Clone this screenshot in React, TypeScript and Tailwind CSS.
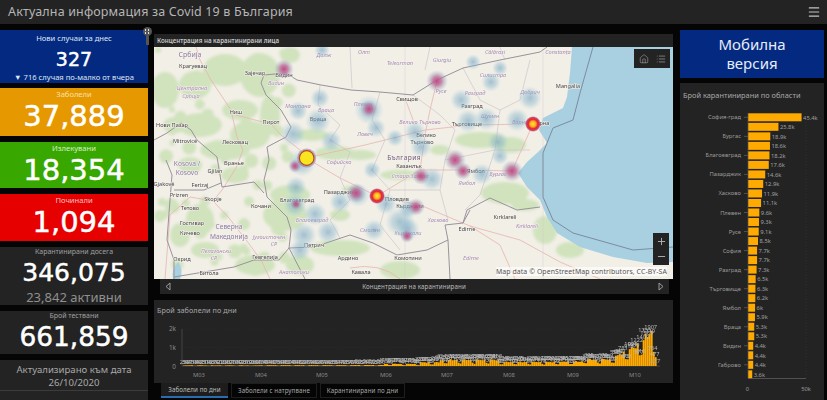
import { Home, List, Menu, Plus, Minus } from "lucide-react"

const font = "font-['Noto_Sans','Open_Sans',sans-serif]"
const numFont = "font-['DejaVu_Sans',sans-serif] [-webkit-text-stroke:0.5px_white]"

// place names on the map, in page coordinates
const cities: [string, number, number][] = [
  ["Крагуевац", 193, 68], ["Зајечар", 255, 75], ["Видин", 284, 77], ["Ниш", 236, 114], ["Пирот", 271, 124],
  ["Нови Пазар", 172, 127], ["Mitrovicë", 185, 143], ["Лесковац", 235, 144], ["Gjilan", 215, 173], ["Враньe", 234, 165],
  ["Ferizaj", 200, 187], ["Gjakovë", 164, 186], ["Prizren", 179, 197], ["Skopje", 213, 201], ["Тетово", 190, 210],
  ["Кочани", 261, 208], ["Гостивар", 192, 225], ["Кичево", 190, 235], ["Охрид", 182, 261], ["Гевгелија", 265, 259],
  ["Битола", 209, 275], ["Петрич", 314, 247], ["Благоевград", 297, 202], ["Пазарджик", 339, 194], ["Пловдив", 397, 201],
  ["Свищов", 407, 101], ["Разград", 472, 108], ["Търговище", 467, 126], ["Велико", 426, 137], ["Търново", 422, 144],
  ["Казанлък", 409, 168], ["Ямбол", 476, 173], ["Варна", 541, 125], ["Mangalia", 568, 88], ["Враца", 318, 121],
  ["Kırklareli", 505, 219], ["Edirne", 467, 231], ["Кърджали", 410, 208], ["Комотини", 408, 260], ["Ардино", 348, 260],
  ["Кавала", 361, 274],
]
const regions: [string, number, number][] = [
  ["Централна", 192, 90], ["Србија", 191, 98], ["Видин", 276, 85], ["Монтана", 298, 108], ["Враца", 326, 112],
  ["Ловеч", 365, 136], ["Велико Търново", 420, 124], ["Плевен", 363, 106], ["Русе", 441, 93], ["Разград", 475, 95],
  ["Силистра", 493, 77], ["Добрич", 530, 94], ["Шумен", 490, 118], ["Варна", 520, 124], ["Бургас", 498, 176],
  ["Ямбол", 467, 185], ["Стара Загора", 410, 178], ["Хасково", 438, 222], ["Кърджали", 408, 235], ["Смолян", 370, 232],
  ["Софийско", 339, 164], ["Благоевград", 312, 222], ["Пелагонски", 216, 253], ["СР", 214, 260], ["Југоисточен", 269, 239],
  ["СР", 274, 246], ["Kırklareli", 527, 228], ["Edirne", 471, 260], ["Долж", 324, 57], ["Teleorman", 400, 65],
  ["Giurgiu", 442, 62], ["Constanța", 558, 54], ["Călărași", 495, 54], ["Олт", 364, 54], ["Анатолики", 294, 274],
]

const greens: [number, number, number, number][] = [
  [165, 90, 14, 18], [195, 85, 16, 14], [225, 70, 22, 16], [260, 75, 20, 22], [240, 110, 18, 10], [200, 125, 22, 12],
  [175, 125, 12, 8], [250, 135, 20, 14], [225, 150, 25, 10], [270, 115, 10, 20], [290, 55, 10, 8], [190, 165, 12, 8],
  [235, 175, 14, 8], [290, 195, 20, 10], [285, 215, 22, 16], [200, 220, 14, 16], [180, 235, 10, 12], [255, 265, 20, 10],
  [300, 265, 14, 10], [340, 248, 30, 8], [400, 270, 20, 9], [335, 153, 20, 7], [360, 155, 16, 5], [400, 175, 20, 5],
  [440, 150, 10, 5], [480, 140, 25, 8], [510, 145, 16, 8], [505, 193, 24, 11], [525, 205, 14, 6], [340, 215, 10, 6],
  [350, 190, 8, 4], [545, 230, 12, 14], [570, 250, 14, 8], [312, 135, 16, 6], [205, 250, 14, 8],
]

// small scattered forest around the west of the map
const scatter = Array.from({ length: 70 }, (_, i) => ({
  x: 158 + Math.abs(Math.sin(i * 12.9898) * 43758.5) % 135,
  y: 50 + Math.abs(Math.sin(i * 78.233) * 12543.7) % 225,
  r: 3 + (i % 5),
}))

// blue patches of the heat layer: x, y, radius
const heatBlue: [number, number, number][] = [
  [302, 163, 14], [293, 134, 13], [318, 121, 13], [322, 50, 8], [369, 110, 15], [376, 128, 10], [395, 138, 9],
  [331, 141, 11], [372, 170, 9], [415, 132, 11], [421, 147, 11], [461, 100, 11], [468, 121, 12], [486, 119, 12], [473, 62, 8],
  [491, 82, 10], [500, 68, 8], [530, 98, 12], [517, 120, 12], [498, 142, 11], [500, 156, 9], [296, 187, 11], [295, 205, 12],
  [315, 214, 12], [328, 232, 12], [304, 235, 13], [300, 250, 11], [340, 202, 11], [386, 204, 11], [400, 222, 15], [408, 209, 10],
  [358, 195, 12], [374, 230, 11], [408, 229, 12], [320, 98, 10], [298, 111, 10], [432, 179, 12], [482, 174, 11],
]
const heatPink: [number, number, number][] = [
  [437, 81, 11], [512, 171, 11], [284, 69, 10], [369, 109, 9], [455, 160, 11], [463, 171, 9], [421, 176, 9], [416, 207, 9],
  [356, 193, 10], [295, 166, 7], [407, 236, 7], [296, 204, 6],
]
const hot: [number, number, number][] = [
  [533, 124, 8], [377, 196, 8],
]

const chartTicks: [string, number][] = [
  ["M03", 199], ["M04", 261], ["M05", 322], ["M06", 386], ["M07", 447], ["M08", 509], ["M09", 573], ["M10", 635],
]

// daily new cases, rough curve of the bars
const daily = Array.from({ length: 238 }, (_, i) => {
  const dip = [1, 1.05, 0.95, 0.9, 1, 0.45, 0.35][i % 7]
  let base = 25 + (i % 5) * 4
  if (i > 40) base = 45
  if (i > 85) base = 50
  if (i > 100) base = 110
  if (i > 118) base = 190
  if (i > 128) base = 320
  if (i > 158) base = 210
  if (i > 190) base = 230
  if (i > 200) base = 340
  if (i > 215) base = 400 + (i - 215) * 50
  if (i > 227) base = 1000 + (i - 227) * 100
  if (i > 235) base = 1700 - (i - 235) * 300
  return Math.round(base * dip + Math.abs(Math.sin(i * 1.7)) * base * 0.12)
})

const regionBars: [string | null, number, string][] = [
  ["София-град", 45.4, "45.4k"], [null, 25.8, "25.8k"], ["Бургас", 18.9, "18.9k"], [null, 18.6, "18.6k"],
  ["Благоевград", 18.2, "18.2k"], [null, 17.6, "17.6k"], ["Пазарджик", 14.6, "14.6k"], [null, 12.9, "12.9k"],
  ["Хасково", 11.9, "11.9k"], [null, 11.1, "11.1k"], ["Плевен", 9.6, "9.6k"], [null, 9.3, "9.3k"],
  ["Русе", 9.1, "9.1k"], [null, 8.5, "8.5k"], ["София", 7.7, "7.7k"], [null, 7.7, "7.7k"],
  ["Разград", 7.3, "7.3k"], [null, 6.5, "6.5k"], ["Търговище", 6.3, "6.3k"], [null, 6.2, "6.2k"],
  ["Ямбол", 6, "6k"], [null, 5.9, "5.9k"], ["Враца", 5.3, "5.3k"], [null, 5.3, "5.3k"],
  ["Видин", 4.4, "4.4k"], [null, 4.4, "4.4k"], ["Габрово", 4.4, "4.4k"], [null, 3.6, "3.6k"],
]

function MapArt() {
  const halo = { stroke: "#f4f1ec", strokeWidth: 1 }
  return (
    <svg viewBox="154 47 519 232" className="block w-full h-full blur-[0.4px]">
      <defs>
        <radialGradient id="blue">
          <stop offset="0%" stopColor="#6f9fc0" stopOpacity="0.6" />
          <stop offset="55%" stopColor="#88b7cc" stopOpacity="0.4" />
          <stop offset="100%" stopColor="#a6cfdc" stopOpacity="0" />
        </radialGradient>
        <radialGradient id="pink">
          <stop offset="0%" stopColor="#c4488a" />
          <stop offset="40%" stopColor="#b4648f" stopOpacity="0.75" />
          <stop offset="100%" stopColor="#8fb8d0" stopOpacity="0" />
        </radialGradient>
        <radialGradient id="hot">
          <stop offset="0%" stopColor="#ffe93a" />
          <stop offset="35%" stopColor="#ffb020" />
          <stop offset="60%" stopColor="#e8232c" />
          <stop offset="82%" stopColor="#c92a55" stopOpacity="0.85" />
          <stop offset="100%" stopColor="#9a5a90" stopOpacity="0" />
        </radialGradient>
        <filter id="soft">
          <feGaussianBlur stdDeviation="1.6" />
        </filter>
      </defs>
      <rect x="154" y="47" width="519" height="232" fill="#f2efe7" />
      <g filter="url(#soft)" fill="#d0e3bd">
        {greens.map(([x, y, rx, ry], i) => (
          <ellipse key={i} cx={x} cy={y} rx={rx} ry={ry} />
        ))}
        {scatter.map((s, i) => (
          <circle key={i} cx={s.x} cy={s.y} r={s.r} />
        ))}
      </g>
      {/* Black Sea */}
      <path
        d="M572 47 L570 73 L567 97 L563 108 L543 118 L539 130 L547 143 L537 153 L527 162 L518 173 L527 187 L540 200 L547 217 L557 233 L580 247 L613 257 L647 263 L673 262 L673 47 Z"
        fill="#a8d0e0"
      />
      <path d="M178 262 q6 8 2 17 l-7 0 q-2 -10 5 -17 Z" fill="#a8d0e0" />
      {/* roads */}
      <g fill="none" stroke="#e8b4ae" strokeWidth="0.8">
        <path d="M196 47 L200 60 L211 80 L231 110 L237 137 L243 150 L236 168 L222 190 L213 201 L229 218 L250 245 L262 262 L270 279" />
        <path d="M236 115 L255 120 L271 124 L281 135 L300 150 L306 158" />
        <path d="M306 158 L340 178 L377 196 L420 205 L470 226 L520 240 L560 262 L600 279" />
        <path d="M377 196 L420 170 L470 170 L512 171" />
        <path d="M306 158 L365 145 L425 130 L470 125 L533 124" />
        <path d="M470 226 L500 245 L515 279 M213 201 L190 197 L170 215 L165 279" />
        <path d="M437 81 L430 110 L425 135 L420 170 M406 101 L415 125" />
        <path d="M400 279 Q380 262 350 268 M512 171 L533 124" />
      </g>
      {/* province lines */}
      <g fill="none" stroke="#cfc4ca" strokeWidth="0.7">
        <path d="M320 85 L318 105 L340 125 L330 140 L350 152 L340 178 L350 200 L330 220 L340 238" />
        <path d="M380 92 L372 120 L385 140 L372 170 L390 190 L380 225 L400 250" />
        <path d="M413 95 L440 115 L455 130 L445 160 L440 190 L448 220" />
        <path d="M463 68 L480 100 L500 110 L520 100 L530 60 M500 110 L495 150 L480 195 L465 210" />
        <path d="M445 160 L495 150 L530 150 M390 190 L440 190 M430 47 L425 70 M350 47 L352 88 M500 47 L505 60" />
        <path d="M405 47 L405 279 M543 47 L543 279" strokeOpacity="0.5" />
      </g>
      {/* borders */}
      <g fill="none" stroke="#9a929c" strokeWidth="1">
        <path d="M286 73 L264 75 L261 83 L266 95 L281 110 L291 127 L286 137 L267 147 L269 160 L264 180 L267 197 L287 217 L291 230 L289 248 L314 247 L341 238 L350 235 L373 243 L397 255 L427 250 L448 240 L445 225 L463 223 L467 210 L490 198 L517 210 L540 207" />
        <path d="M286 73 L297 80 L321 85 L351 90 L380 92 L413 95 L437 80 L463 68 L500 60 L540 52 L547 47" />
        <path d="M154 140 L167 133 L181 123 L191 130 L197 140 L217 157 L222 187 L254 182 L264 193" />
        <path d="M174 190 L204 190 L221 183 M166 160 L172 175 L169 213 L167 240 L174 260 L174 279 M174 277 L234 267 L254 260 L279 260 L289 248" />
        <path d="M289 248 L305 279 M448 240 L450 279 M463 223 L470 210" />
        <path d="M593 47 L580 93 L573 120 L553 128 L543 153 L543 197 L553 220 L573 233 L633 250 L673 247" stroke="#7d8c9e" />
      </g>
      {/* labels sit under the heat layer */}
      <g className={font}>
        {regions.map(([t, x, y], i) => (
          <text key={i} x={x} y={y} textAnchor="middle" fontSize="5.6" fontStyle="italic" fill="#a88db2" {...halo} className="[paint-order:stroke]">
            {t}
          </text>
        ))}
        {cities.map(([t, x, y], i) => (
          <text key={i} x={x} y={y} textAnchor="middle" fontSize="5.6" fill="#4a4646" {...halo} className="[paint-order:stroke]">
            {t}
          </text>
        ))}
        <text x="190" y="57" textAnchor="middle" fontSize="7" fill="#8d7ba2" {...halo} className="[paint-order:stroke]">Србија</text>
        <text x="404" y="160" textAnchor="middle" fontSize="6.6" letterSpacing="0.4" fill="#6d5a78" {...halo} className="[paint-order:stroke]">България</text>
        <text x="187" y="166" textAnchor="middle" fontSize="6.6" fill="#8d7ba2" {...halo} className="[paint-order:stroke]">Kosova /</text>
        <text x="187" y="175" textAnchor="middle" fontSize="6.6" fill="#8d7ba2" {...halo} className="[paint-order:stroke]">Kosovo</text>
        <text x="229" y="229" textAnchor="middle" fontSize="6.6" fill="#8d7ba2" {...halo} className="[paint-order:stroke]">Северна</text>
        <text x="229" y="239" textAnchor="middle" fontSize="6.6" fill="#8d7ba2" {...halo} className="[paint-order:stroke]">Македонија</text>
      </g>
      {heatBlue.map(([x, y, r], i) => (
        <circle key={i} cx={x} cy={y} r={r} fill="url(#blue)" />
      ))}
      {heatPink.map(([x, y, r], i) => (
        <circle key={i} cx={x} cy={y} r={r} fill="url(#pink)" />
      ))}
      {hot.map(([x, y, r], i) => (
        <circle key={i} cx={x} cy={y} r={r} fill="url(#hot)" />
      ))}
      <circle cx="306.7" cy="158" r="9.5" fill="#8f6aa0" fillOpacity="0.5" />
      <circle cx="306.7" cy="158" r="7.3" fill="#f9e51f" stroke="#b3491e" strokeWidth="1.2" />
    </svg>
  )
}

function DailyChart() {
  return (
    <svg viewBox="154 300 519 83" className={`block w-full h-full ${font}`}>
      {[329, 347.5].map((y) => (
        <line key={y} x1="182" x2="660" y1={y} y2={y} stroke="#2e2e2e" strokeWidth="0.6" strokeDasharray="1 2" />
      ))}
      <line x1="182" x2="182" y1="329" y2="366" stroke="#555" strokeWidth="0.7" />
      <line x1="182" x2="660" y1="366" y2="366" stroke="#555" strokeWidth="0.7" />
      {[["2k", 331], ["1k", 350], ["0", 369]].map(([t, y]) => (
        <text key={t} x="176" y={y} textAnchor="end" fontSize="6.4" fill="#8a8a8a">{t}</text>
      ))}
      {chartTicks.map(([t, x]) => (
        <text key={t} x={x} y="377" textAnchor="middle" fontSize="5.8" fill="#8a8a8a">{t}</text>
      ))}
      {daily.map((v, i) => {
        const x = 183 + i * 1.99
        const h = (v / 2000) * 37
        return <rect key={i} x={x} y={366 - h} width="2" height={h} fill="#ffaa00" />
      })}
      <g className="blur-[0.2px]">
        {daily.map((v, i) => {
          const x = 183 + i * 1.99
          const h = (v / 2000) * 37
          return (
            <text key={i} x={x} y={364.5 - h} fontSize="5.6" textAnchor="middle" fill="#b8b8b8">{v}</text>
          )
        })}
      </g>
      <text x="650" y="363" fontSize="6" fill="#a8a8a8">327</text>
    </svg>
  )
}

function RegionChart() {
  return (
    <svg viewBox="680 83 144 317" className={`block w-full h-full ${font}`}>
      {regionBars.map(([name, v, label], i) => {
        const y = 117.3 + i * 9.52
        const w = v * 1.18
        return (
          <g key={i}>
            {name && (
              <>
                <text x="741" y={y + 2} textAnchor="end" fontSize="5.8" fill="#9a9a9a">{name}</text>
                <line x1="744" x2="748" y1={y} y2={y} stroke="#666" strokeWidth="0.7" />
              </>
            )}
            <rect x="748" y={y - 4} width={w} height="8" fill="#ffaa00" />
            <text x={749.5 + w} y={y + 2.2} fontSize="5.8" fill="#a0a0a0">{label}</text>
          </g>
        )
      })}
      <line x1="806" x2="806" y1="113" y2="378" stroke="#3a3a3a" strokeWidth="0.6" strokeDasharray="1 2" />
      <line x1="748" x2="748" y1="113" y2="378" stroke="#555" strokeWidth="0.7" />
      <line x1="748" x2="806" y1="378.5" y2="378.5" stroke="#666" strokeWidth="0.7" />
      <text x="747.5" y="391" textAnchor="middle" fontSize="5.8" fill="#9a9a9a">0</text>
      <text x="806" y="391" textAnchor="middle" fontSize="5.8" fill="#9a9a9a">50k</text>
    </svg>
  )
}

function StatCard({ title, value, bg, h, tone }: { title: string; value: string; bg: string; h: string; tone: string }) {
  return (
    <div className={`${bg} ${h} flex flex-col items-center overflow-hidden`}>
      <div className={`${tone} text-[7.6px] leading-[10px] mt-[1px]`}>{title}</div>
      <div className={`${numFont} text-[29px] leading-[34px] text-white`}>{value}</div>
    </div>
  )
}

export default function App() {
  return (
    <div className={`w-[827px] h-[400px] overflow-hidden bg-[#050505] ${font} relative`}>
      {/* Header */}
      <div className="h-6 bg-[#232323] flex items-center justify-between pl-2 pr-[5px]">
        <div className="text-[12.5px] leading-6 tracking-[0.15px] text-[#b5b5b5] whitespace-nowrap">
          Актуална информация за Covid 19 в България
        </div>
        <Menu size={14} strokeWidth={2} className="text-[#c4c4c4] mr-[1px]" />
      </div>

      <div className="flex pt-[6px]">
        {/* Left column */}
        <div className="w-[148px] shrink-0 flex flex-col">
          <div className="bg-[#032a80] h-[53px] flex flex-col items-center text-[#dfe6f5]">
            <div className="text-[7.6px] leading-[12px] mt-[2px]">Нови случаи за днес</div>
            <div className={`${numFont} text-[19px] leading-[22px] mt-[4px] text-white`}>327</div>
            <div className="text-[7.6px] leading-[12px] mt-[1px] whitespace-nowrap">▼ 716 случая по-малко от вчера</div>
          </div>
          <div className="mt-[5px]">
            <StatCard title="Заболели" value="37,889" bg="bg-[#e69800]" h="h-[48px]" tone="text-[#f6e0a8]" />
          </div>
          <div className="mt-[6px]">
            <StatCard title="Излекувани" value="18,354" bg="bg-[#38a800]" h="h-[46px]" tone="text-[#d8eec8]" />
          </div>
          <div className="mt-[6px]">
            <StatCard title="Починали" value="1,094" bg="bg-[#e60000]" h="h-[47px]" tone="text-[#f6c4c4]" />
          </div>
          <div className="mt-[6px] h-[58px] bg-[#232323] flex flex-col items-center">
            <div className="text-[7px] leading-[10px] text-[#a0a0a0]">Карантинирани досега</div>
            <div className={`${numFont} text-[25px] leading-[32px] text-white`}>346,075</div>
            <div className="text-[13px] leading-[16px] text-[#8f8f8f]">23,842 активни</div>
          </div>
          <div className="mt-[6px] h-[43px] bg-[#232323] flex flex-col items-center">
            <div className="text-[7px] leading-[10px] text-[#a0a0a0]">Брой тествани</div>
            <div className={`${numFont} text-[26.4px] leading-[32px] text-white`}>661,859</div>
          </div>
          <div className="mt-[6px] h-[40px] bg-[#232323] text-[#a8a8a8]">
            <div className="h-[31px] pt-[3px] flex flex-col items-center border-b border-[#3c3c3c]">
              <div className="text-[9.6px] leading-[13px]">Актуализирано към дата</div>
              <div className="text-[9.6px] leading-[13px]">26/10/2020</div>
            </div>
          </div>
        </div>

        {/* Middle column */}
        <div className="w-[519px] shrink-0 ml-[6px] pt-1">
          <div className="h-[13px] bg-[#232323] pl-[3px] text-[6.2px] leading-[13px] font-semibold text-[#c8c8c8]">
            Концентрация на карантинирани лица
          </div>
          <div className="relative h-[232px]">
            <MapArt />
            <div className="absolute top-[2px] right-[3px] w-9 h-[19px] bg-[#232323] flex items-center justify-center gap-[7px] text-[#a8a8a8]">
              <Home size={10} strokeWidth={1.4} />
              <List size={10} strokeWidth={1.6} />
            </div>
            <div className="absolute bottom-[14px] right-[4px] w-4 h-8 bg-[#232323] flex flex-col items-center justify-around py-[1px] text-[#b5b5b5]">
              <Plus size={11} strokeWidth={2} />
              <Minus size={11} strokeWidth={2} />
            </div>
            <div className="absolute bottom-[3px] right-[6px] bg-white/60 text-[6.9px] leading-[9px] tracking-[0.1px] text-[#555] whitespace-nowrap">
              Map data © OpenStreetMap contributors, CC-BY-SA
            </div>
          </div>
          <div className="ml-[6px] mr-[4px] h-[15px] bg-[#232323] flex items-center justify-between px-[5px] text-[#a8a8a8]">
            <svg width="6" height="9" viewBox="0 0 6 9" fill="none" stroke="currentColor" strokeWidth="0.9"><path d="M5 1 L1 4.5 L5 8 Z" /></svg>
            <span className="text-[6.2px] leading-[15px] tracking-[0.1px] text-[#bcbcbc] pr-[1px]">Концентрация на карантинирани</span>
            <svg width="6" height="9" viewBox="0 0 6 9" fill="none" stroke="currentColor" strokeWidth="0.9"><path d="M1 1 L5 4.5 L1 8 Z" /></svg>
          </div>
          <div className="mt-[6px] h-[83px] relative bg-[#232323]">
            <div className="absolute left-[3px] top-[4px] text-[7.2px] leading-3 tracking-[0.1px] text-[#a8a8a8]">Брой заболели по дни</div>
            <DailyChart />
          </div>
          <div className="flex gap-[3px] pl-[7px]">
            <div className="w-[67px] h-[15px] bg-[#1d1d1d] border-b-2 border-[#2b6cb0] text-center text-[6.2px] leading-[14px] tracking-[0.1px] text-[#bdbdbd]">Заболели по дни</div>
            <div className="w-[86px] h-[15px] border border-[#1e1e1e] text-center text-[6.2px] leading-[13px] tracking-[0.1px] text-[#a8a8a8]">Заболели с натрупване</div>
            <div className="w-[85px] h-[15px] border border-[#1e1e1e] text-center text-[6.2px] leading-[13px] tracking-[0.1px] text-[#a8a8a8]">Карантинирани по дни</div>
          </div>
        </div>

        {/* Right column */}
        <div className="w-[144px] shrink-0 ml-[7px]">
          <div className="h-[48px] bg-[#032a80] flex flex-col items-center justify-center text-[15px] leading-[19px] text-[#e6ecfa]">
            <span>Мобилна</span>
            <span>версия</span>
          </div>
          <div className="relative mt-[5px] h-[317px] bg-[#232323]">
            <div className="absolute left-[3px] top-[6px] text-[7.4px] leading-3 text-[#a8a8a8] whitespace-nowrap">Брой карантинирани по области</div>
            <RegionChart />
          </div>
        </div>
      </div>

      {/* Splitter handle */}
      <div className="absolute left-[144px] top-[27px] w-[6px] h-[18px] flex flex-col items-center">
        <div className="w-[9px] h-[9px] shrink-0 rounded-full bg-[#555] grid grid-cols-2 place-items-center p-[1.5px]">
          <i className="w-[1.5px] h-[1.5px] bg-[#ddd]" />
          <i className="w-[1.5px] h-[1.5px] bg-[#ddd]" />
          <i className="w-[1.5px] h-[1.5px] bg-[#ddd]" />
          <i className="w-[1.5px] h-[1.5px] bg-[#ddd]" />
        </div>
        <div className="w-[3px] flex-1 bg-[#555]" />
      </div>
    </div>
  )
}
